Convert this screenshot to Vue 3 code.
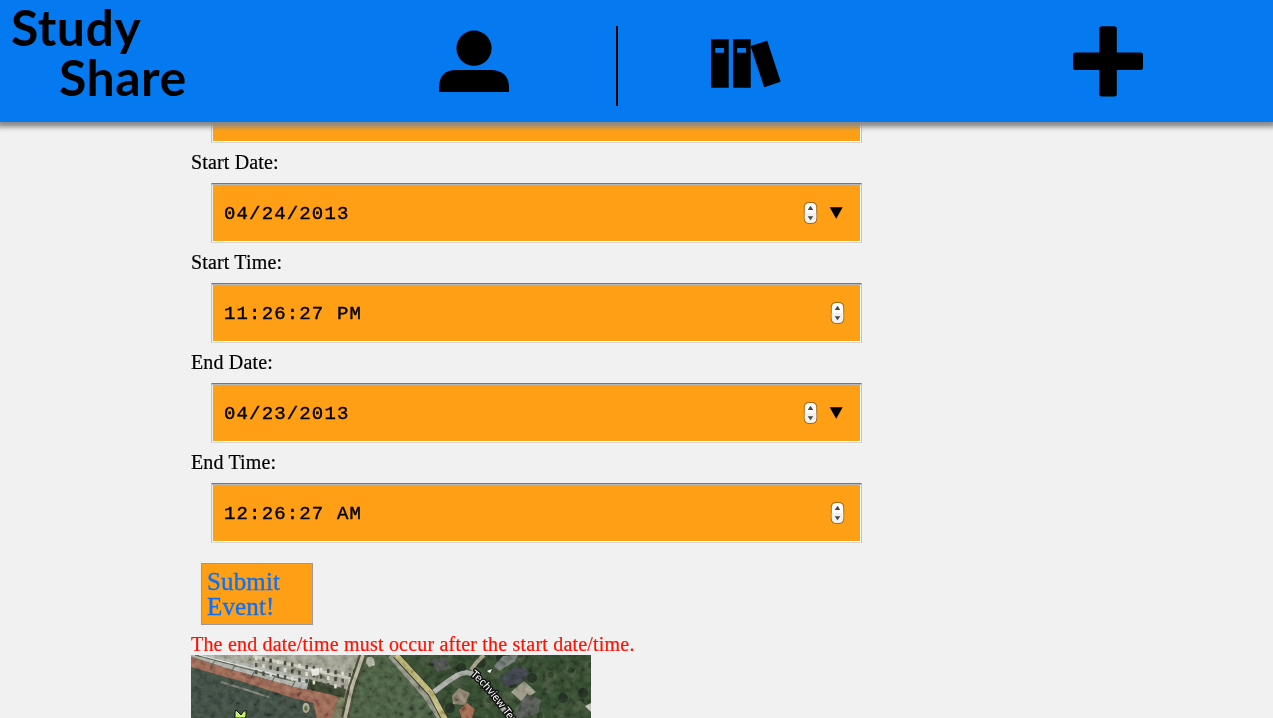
<script setup>
const fields = [
  { label: 'Start Date:', value: '04/24/2013', picker: true },
  { label: 'Start Time:', value: '11:26:27 PM', picker: false },
  { label: 'End Date:', value: '04/23/2013', picker: true },
  { label: 'End Time:', value: '12:26:27 AM', picker: false },
]
const bleachers = [0, 1, 2, 3, 4]
const cars = Array.from({ length: 42 }, (_, i) => ({
  x: 64 + (i % 14) * 7.2,
  y: 1 + Math.floor(i / 14) * 7 + (i % 14) * 1.3,
}))
const trees = Array.from({ length: 95 }, (_, i) => ({
  x: 218 + ((i * 47) % 184),
  y: (i * 29) % 65,
  r: 3 + (i % 5),
  c: ['#2a3c26', '#374b31', '#202e20', '#414f39', '#2f432b'][i % 5],
})).filter((t) => t.x > 222 + t.y * 0.65)
</script>

<template>
  <div class="page">
    <header class="bar">
      <h1 class="logo"><span>Study</span><span class="second">Share</span></h1>
      <svg class="user" width="70" height="62" viewBox="0 0 70 62">
        <circle cx="35" cy="18.2" r="17.6" />
        <path d="M0 62V56Q1 40 17 40H53Q69 41 70 56V62Z" />
      </svg>
      <i class="divider"></i>
      <svg class="books" width="72" height="50" viewBox="0 0 72 50">
        <path fill-rule="evenodd" d="M0 .3H17.7V48.7H0ZM4.3 9.1V13.7H13V9.1ZM22 .3H39.7V48.7H22ZM26.2 9.1V13.7H35V9.1Z" />
        <path d="M39.6 7L56.2 1.7L69.7 42.7L53.2 48.3Z" />
      </svg>
      <svg class="plus" width="70" height="71" viewBox="0 0 70 71">
        <rect x="26.2" y=".3" width="17.6" height="70.2" rx="2.5" />
        <rect x="0" y="26.5" width="70" height="17.6" rx="2.5" />
      </svg>
    </header>

    <main class="form">
      <div class="field cut"></div>
      <template v-for="f in fields" :key="f.label">
        <label class="label">{{ f.label }}</label>
        <div class="field">
          <span class="value">{{ f.value }}</span>
          <svg class="spin" width="15" height="24" viewBox="0 0 15 24">
            <rect x=".8" y="1.1" width="13.4" height="21.8" rx="5" fill="#a96c18" />
            <rect x="1.8" y="2" width="11.4" height="19.8" rx="4.5" fill="#fff" />
            <path d="M1.8 12H13.2V17.5Q13 21.8 9 21.8H6Q2 21.8 1.8 17.5Z" fill="#f1f1f1" />
            <path d="M4.7 9L7.5 4.7L10.3 9ZM4.7 15.2H10.3L7.5 19.3Z" fill="#494949" />
          </svg>
          <svg v-if="f.picker" class="arrow" width="13" height="12" viewBox="0 0 13 12">
            <path d="M-.3 .2H12.7L6.2 11.8Z" />
          </svg>
        </div>
      </template>
      <button class="submit">Submit<br />Event!</button>
      <p class="error">The end date/time must occur after the start date/time.</p>
      <svg class="map" width="400" height="63" viewBox="0 0 400 63">
        <defs>
          <filter id="grain" x="0" y="0" width="100%" height="100%">
            <feTurbulence type="fractalNoise" baseFrequency="0.16" numOctaves="4" seed="7" />
            <feColorMatrix values="1.3 0 0 0 -.25  1.3 0 0 0 -.25  1.3 0 0 0 -.25  0 0 0 0 1" />
          </filter>
          <filter id="soft"><feGaussianBlur stdDeviation=".6" /></filter>
          <path id="street" d="M279 20Q289 28 298 39L322 70" />
        </defs>
        <rect width="400" height="63" fill="#34472f" />
        <g filter="url(#soft)">
          <path d="M0 10L56 27L102 43L122 48L127 63H0Z" fill="#3e493f" />
          <path d="M0 0H172L158 40L112 34L32 12L0 2Z" fill="#969787" />
          <path d="M0 2L32 12L60 20L112 34L148 38L146 49L141 63H126L122 48L102 43L56 28L0 12Z" fill="#90604f" />
          <path d="M148 38L159 34L153 63H141Z" fill="#6b6d54" />
          <path d="M30 27L78 42" stroke="#72776f" stroke-width="2" />
          <path d="M0 0H20L120 24L112 34L32 12Z" fill="#a9aca6" />
          <path v-for="b in bleachers" :key="b" d="M4 0L24 5L20 12" :transform="`translate(${b * 20} ${b * 5.4})`" fill="none" stroke="#555e50" stroke-width="1.3" />
          <path d="M8 0L118 28" stroke="#e0e1db" stroke-width="1" />
          <path d="M118 24L155 34L153 43L116 34Z" fill="#39432f" />
          <path d="M62 1L166 25" stroke="#c5c3b5" stroke-width="3" />
          <rect v-for="(c, i) in cars" :key="i" :x="c.x" :y="c.y" width="2.5" height="4" :fill="i % 3 ? '#42463e' : '#d9d8ca'" />
          <path d="M120 14L128 13V20L121 21Z" fill="#e4e1d7" />
          <path d="M174 0H207L250 63H158Z" fill="#47583f" />
          <path d="M172 0L161 32L154 63" fill="none" stroke="#44472f" stroke-width="8" />
          <path d="M172 0L161 32L154 63" fill="none" stroke="#b0ad9b" stroke-width="3.5" />
          <path d="M176 3Q180 0 183 4L184 10L178 12L175 8Z" fill="#a7aa98" />
          <ellipse cx="115" cy="53" rx="3.5" ry="5" fill="#b6a08c" />
          <ellipse cx="115" cy="53" rx="1.8" ry="2.8" fill="#4c7544" />
          <circle v-for="(t, i) in trees" :key="i" :cx="t.x" :cy="t.y" :r="t.r" :fill="t.c" />
          <path d="M200 0L235 40L250 63" fill="none" stroke="#85887a" stroke-width="7" />
          <path d="M205 0L240 38L254 64" fill="none" stroke="#33382c" stroke-width="7.5" />
          <path d="M205 0L240 38L254 64" fill="none" stroke="#b5ae70" stroke-width="5.5" />
          <path d="M243 37Q258 25 267 20Q276 15 286 21L322 66" fill="none" stroke="#a0a29c" stroke-width="5" />
          <path d="M280 15Q285 7 293 0" fill="none" stroke="#98967f" stroke-width="4" />
          <path d="M240 5L254 2L260 13L246 17Z" fill="#494e4b" />
          <path d="M303 11L312 1L327 0L324 6L308 16Z" fill="#6b716c" />
          <path d="M309 22L326 10L338 16L333 26L314 32Z" fill="#3b4147" />
          <path d="M296 16L301 14L299 18Z" fill="#fff" />
          <path d="M320 37L333 26L345 37L330 46Z" fill="#918f7d" />
          <path d="M324 54L336 39L350 45L347 58L330 63H325Z" fill="#50534f" />
          <path d="M261 41L268 33L279 38L274 50L262 49Z" fill="#827766" />
          <path d="M268 55L276 48L284 54L281 63H271Z" fill="#94604c" />
          <path d="M394 51L400 48V57Z" fill="#b8b7a9" />
        </g>
        <rect class="grain" width="400" height="63" filter="url(#grain)" />
        <text class="street"><textPath href="#street">Techview Ter</textPath></text>
        <path d="M45 55L48 58L50 60L52 57L55 55V61L54 63H44V57Z" fill="#c7f36c" stroke="#111" stroke-width="1" />
      </svg>
    </main>
  </div>
</template>

<style>
body { margin: 0; background: #f1f1f1; overflow: hidden; }
</style>

<style scoped>
.page { height: 718px; overflow: hidden; background: #f1f1f1; color: #000; font-family: "Liberation Serif", "Times New Roman", serif; }
.bar { position: relative; z-index: 1; display: flex; align-items: flex-start; height: 122px; background: #057af0; box-shadow: 0 2px 5px 3px #888; }
.logo { display: flex; flex-direction: column; width: 428px; margin: 2px 0 0 11px; font: 700 50px/50px Lato, sans-serif; letter-spacing: .45px; }
.second { margin-left: 48px; }
.user { margin-top: 30px; }
.divider { width: 2px; height: 80px; margin: 26px 0 0 107px; background: #000; }
.books { margin: 39px 0 0 93px; }
.plus { margin: 26px 0 0 290px; }
.form { display: flex; flex-direction: column; align-items: flex-start; width: 671px; margin-left: 191px; }
.field { box-sizing: border-box; display: flex; align-items: center; width: 651px; height: 60px; margin-left: 20px; padding: 0 14px 0 12px; background: #ff9f15; border: 1px solid #c3c3c3; border-top-color: #777; border-bottom-color: #d6d6d6; box-shadow: inset 0 1px #b6b6b6, inset 1px 0 #eee, inset -1px -1px #fff; }
.cut { height: 21px; border-top: 0; box-shadow: inset 1px 0 #eee, inset -1px -1px #fff; }
.label { height: 40px; font-size: 20px; line-height: 39px; letter-spacing: .15px; -webkit-text-stroke: .2px #000; }
.value { flex: 1; font: 19px/24px "Liberation Mono", monospace; letter-spacing: 1.15px; -webkit-text-stroke: .4px #000; padding-top: 2px; }
.spin { margin-right: 2px; }
.field:has(.arrow) .spin { margin-right: 12px; }
.arrow { margin-right: 4px; overflow: visible; }
.submit { box-sizing: border-box; width: 112px; height: 62px; margin: 20px 0 0 10px; padding: 0 0 0 5px; border: 1px solid #999; border-radius: 0; background: #ff9f15; color: #0b70fa; font: 25px/25px "Liberation Serif", serif; letter-spacing: .15px; -webkit-text-stroke: .3px #0b70fa; text-align: left; }
.error { height: 30px; margin: 0; color: #f10; font-size: 20px; line-height: 39px; white-space: nowrap; letter-spacing: .2px; -webkit-text-stroke: .2px #f10; }
.map { position: relative; flex: none; overflow: hidden; }
.grain { mix-blend-mode: overlay; opacity: .35; }
.street { font: 11px "Liberation Sans", Arial, sans-serif; fill: #fff; stroke: #111; stroke-width: 3px; paint-order: stroke; stroke-linejoin: round; }
</style>
